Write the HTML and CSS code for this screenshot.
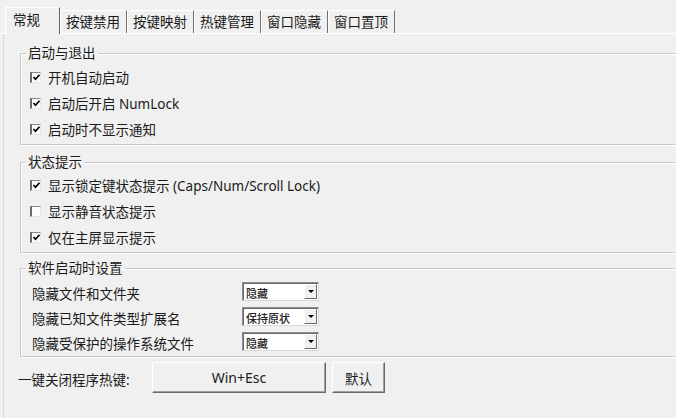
FILE: index.html
```html
<!DOCTYPE html>
<html lang="zh-CN">
<head>
  <meta charset="UTF-8">
  <meta name="viewport" content="width=device-width, initial-scale=1.0">
  <title>设置</title>
  <link rel="stylesheet" href="styles.css">
</head>
<body>
  <!-- Tab strip -->
  <div class="tabs">
    <div class="tab active">常规</div>
    <div class="tab">按键禁用</div>
    <div class="tab">按键映射</div>
    <div class="tab">热键管理</div>
    <div class="tab">窗口隐藏</div>
    <div class="tab">窗口置顶</div>
  </div>

  <!-- General page -->
  <div class="page">
    <fieldset class="group group-start">
      <legend>启动与退出</legend>
      <label class="check"><span class="box checked"></span>开机自动启动</label>
      <label class="check"><span class="box checked"></span>启动后开启 NumLock</label>
      <label class="check"><span class="box checked"></span>启动时不显示通知</label>
    </fieldset>

    <fieldset class="group group-status">
      <legend>状态提示</legend>
      <label class="check"><span class="box checked"></span>显示锁定键状态提示 (Caps/Num/Scroll Lock)</label>
      <label class="check"><span class="box"></span>显示静音状态提示</label>
      <label class="check"><span class="box checked"></span>仅在主屏显示提示</label>
    </fieldset>

    <fieldset class="group group-files">
      <legend>软件启动时设置</legend>
      <div class="option">
        <span>隐藏文件和文件夹</span>
        <div class="combo"><span class="combo-text">隐藏</span><span class="combo-btn"></span></div>
      </div>
      <div class="option">
        <span>隐藏已知文件类型扩展名</span>
        <div class="combo"><span class="combo-text">保持原状</span><span class="combo-btn"></span></div>
      </div>
      <div class="option">
        <span>隐藏受保护的操作系统文件</span>
        <div class="combo"><span class="combo-text">隐藏</span><span class="combo-btn"></span></div>
      </div>
    </fieldset>

    <div class="hotkey">
      <span class="hotkey-label">一键关闭程序热键:</span>
      <button class="btn btn-key">Win+Esc</button>
      <button class="btn btn-default">默认</button>
    </div>
  </div>
</body>
</html>
```

FILE: styles.css
```css
body {
  margin: 0;
  background-color: #f0f0f0;
  color: #1b1b1b;
  font-family: "Noto Sans", "Noto Sans CJK SC", sans-serif;
  font-size: 13.5px;
  width: 676px;
  height: 418px;
  overflow: hidden;
}

/* Tab strip */
.tabs {
  display: flex;
  align-items: flex-end;
  height: 33px;
  padding-left: 5px;
  border-bottom: 1px solid #ffffff;
}

.tab {
  box-sizing: border-box;
  height: 23px;
  padding: 2px 6px 0 5px;
  line-height: 19px;
  border-top: 1px solid #ffffff;
  border-left: 1px solid #ffffff;
  border-right: 1px solid #707070;
  white-space: nowrap;
}

.tab.active {
  height: 27px;
  padding: 0 19px 0 7px;
  line-height: 24px;
  margin-bottom: -1px;
  background-color: #f0f0f0;
  border-right-color: #606060;
}

/* Tab page */
.page {
  margin-left: 3px;
  border-left: 1px solid #dadada;
  height: 384px;
  overflow: hidden;
}

/* Group boxes */
.group {
  margin: 0 -30px 0 16px;
  padding: 0 0 2px 0;
  border: 1px solid #c8c8c8;
  box-shadow: inset 1px 1px 0 #ffffff, 1px 1px 0 #ffffff;
}

.group legend {
  margin-left: 5px;
  padding: 0 2px;
  line-height: 18px;
}

.group-start {
  margin-top: 10px;
  padding-top: 2px;
}

.group-status {
  margin-top: 8px;
  padding-top: 1px;
}

.group-files {
  margin-top: 6px;
  padding-top: 2px;
  padding-bottom: 2px;
}

/* Checkbox rows */
.check {
  display: flex;
  align-items: center;
  height: 26px;
  padding-left: 9px;
}

.box {
  box-sizing: border-box;
  width: 11px;
  height: 11px;
  margin-right: 7px;
  background-color: #fbfbfb;
  border-top: 1px solid #8a8a8a;
  border-left: 2px solid #6a6a6a;
  border-right: 1px solid #e6e6e6;
  border-bottom: 1px solid #e6e6e6;
}

.box.checked {
  background-image: url("data:image/svg+xml,%3Csvg xmlns='http://www.w3.org/2000/svg' width='9' height='9' viewBox='0 0 9 9'%3E%3Cpath d='M1.5 4 L3.5 6.2 L7.5 1.8' fill='none' stroke='%23000' stroke-width='1.7'/%3E%3C/svg%3E");
  background-repeat: no-repeat;
  background-position: 0 0;
}

/* Combo rows */
.option {
  display: grid;
  grid-template-columns: 210px 77px;
  align-items: center;
  height: 25px;
  padding-left: 11px;
}

.option span:first-child {
  padding-top: 3px;
}

.combo {
  box-sizing: border-box;
  display: flex;
  align-items: center;
  height: 19px;
  background-color: #ffffff;
  border-top: 1px solid #8c8c8c;
  border-left: 1px solid #8c8c8c;
  border-right: 1px solid #d8d8d8;
  border-bottom: 1px solid #d8d8d8;
  box-shadow: inset 1px 1px 0 #6a6a6a;
}

.combo-text {
  flex: 1;
  padding-left: 3px;
  font-family: "Noto Sans CJK SC", sans-serif;
  font-size: 11px;
  font-weight: 500;
  line-height: 17px;
  color: #222;
}

.combo-btn {
  box-sizing: border-box;
  position: relative;
  width: 13px;
  height: 15px;
  margin-right: 1px;
  background-color: #f0f0f0;
  border-top: 1px solid #ffffff;
  border-left: 1px solid #ffffff;
  border-right: 1px solid #6a6a6a;
  border-bottom: 1px solid #6a6a6a;
}

.combo-btn::after {
  content: "";
  position: absolute;
  left: 3px;
  top: 5px;
  border-left: 3px solid transparent;
  border-right: 3px solid transparent;
  border-top: 3px solid #000;
}

/* Hotkey row */
.hotkey {
  display: flex;
  align-items: center;
  margin-top: 5px;
}

.hotkey-label {
  box-sizing: border-box;
  width: 148px;
  padding-left: 14px;
  padding-top: 2px;
}

.btn {
  box-sizing: border-box;
  height: 31px;
  background-color: #f0f0f0;
  border-top: 1px solid #ffffff;
  border-left: 1px solid #ffffff;
  border-right: 1px solid #6a6a6a;
  border-bottom: 1px solid #6a6a6a;
  box-shadow: inset -1px -1px 0 #a0a0a0;
  font-family: "Noto Sans", "Noto Sans CJK SC", sans-serif;
  font-size: 13.5px;
  color: #1b1b1b;
  padding: 0;
}

.btn-key {
  width: 174px;
  font-size: 14px;
}

.btn-default {
  width: 53px;
  margin-left: 6px;
}
```
